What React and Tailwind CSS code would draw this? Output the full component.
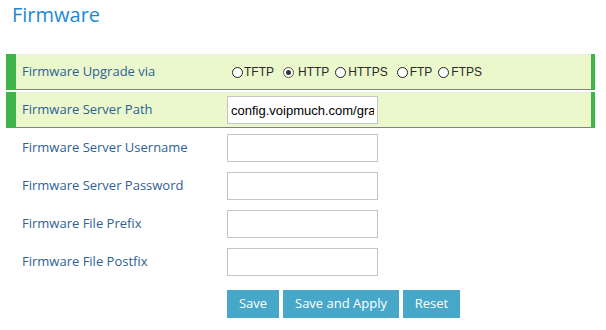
import React from "react";

const labelFont = { fontFamily: '"Open Sans", "DejaVu Sans", sans-serif' };

function Radio({ checked, label, cm, tm }) {
  return (
    <label className="flex items-center">
      <span
        className={
          "w-[11px] h-[11px] rounded-full border bg-white flex items-center justify-center " +
          (checked ? "border-[#555] " : "border-[#222] ") +
          cm
        }
      >
        {checked && <span className="w-[5px] h-[5px] rounded-full bg-[#333]" />}
      </span>
      <span className={"text-[12px] text-[#2a2a2a] " + tm} style={{ fontFamily: '"Liberation Sans", Arial, sans-serif' }}>
        {label}
      </span>
    </label>
  );
}

function Input({ value }) {
  return (
    <input
      readOnly
      value={value || ""}
      className="w-[151px] h-[28px] border border-[#c4c4c4] bg-white px-[3px] text-[13px] text-black outline-none"
      style={{ fontFamily: '"Liberation Sans", Arial, sans-serif' }}
    />
  );
}

function HighlightRow({ label, children }) {
  return (
    <div className="flex h-[36px] mb-[2px]">
      <div className="w-[10px] bg-[#3db54a]" />
      <div className="flex-1 flex items-center bg-[#eaf8cb] border-t border-t-[#ececec] border-b border-b-[#808080]">
        <div className="w-[211px] pl-[6px] text-[13px] text-[#2f5f95]" style={labelFont}>
          {label}
        </div>
        {children}
      </div>
      <div className="w-[4px] bg-[#3db54a]" />
    </div>
  );
}

function PlainRow({ label, children }) {
  return (
    <div className="flex h-[36px] mb-[2px] items-center pl-[10px]">
      <div className="w-[211px] pl-[6px] text-[13px] text-[#2f5f95]" style={labelFont}>
        {label}
      </div>
      {children}
    </div>
  );
}

function Btn({ children, w }) {
  return (
    <button
      className={"h-[28px] bg-[#46a7c8] text-white text-[13px] flex items-center justify-center " + w}
      style={labelFont}
    >
      {children}
    </button>
  );
}

export default function App() {
  return (
    <div className="w-[606px] h-[330px] bg-white overflow-hidden pl-[6px] pr-[11px]">
      <div className="h-[54px] pt-px">
        <div className="text-[20px] leading-[27px] text-[#1b8ad4] pl-[6px]" style={labelFont}>
          Firmware
        </div>
      </div>
      <HighlightRow label="Firmware Upgrade via">
        <div className="flex items-center">
          <Radio label="TFTP" cm="ml-[5px]" tm="ml-[1px]" />
          <Radio checked label="HTTP" cm="ml-[9px]" tm="ml-[4px]" />
          <Radio label="HTTPS" cm="ml-[6px]" tm="ml-[2px]" />
          <Radio label="FTP" cm="ml-[9px]" tm="ml-[2px]" />
          <Radio label="FTPS" cm="ml-[6px]" tm="ml-[2px]" />
        </div>
      </HighlightRow>
      <HighlightRow label="Firmware Server Path">
        <Input value="config.voipmuch.com/grandstream" />
      </HighlightRow>
      <PlainRow label="Firmware Server Username">
        <Input />
      </PlainRow>
      <PlainRow label="Firmware Server Password">
        <Input />
      </PlainRow>
      <PlainRow label="Firmware File Prefix">
        <Input />
      </PlainRow>
      <PlainRow label="Firmware File Postfix">
        <Input />
      </PlainRow>
      <div className="flex gap-[4px] pl-[221px] mt-[10px]">
        <Btn w="w-[52px]">Save</Btn>
        <Btn w="w-[116px]">Save and Apply</Btn>
        <Btn w="w-[57px]">Reset</Btn>
      </div>
    </div>
  );
}
